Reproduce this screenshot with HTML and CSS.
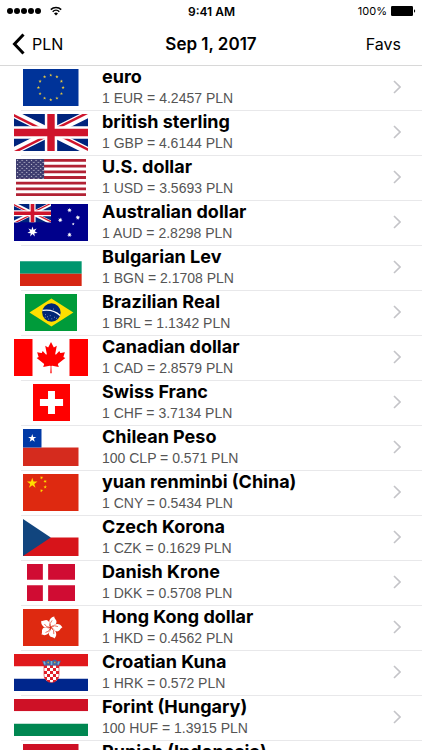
FILE: index.html
```html
<!DOCTYPE html>
<html lang="en">
<head>
    <meta charset="UTF-8">
    <meta name="viewport" content="width=device-width, initial-scale=1.0">
    <title>Exchange rates - PLN</title>
    <link rel="stylesheet" href="styles.css">
</head>
<body>
    <!-- shared shapes -->
    <svg class="defs" width="0" height="0" aria-hidden="true">
        <defs>
            <polygon id="star" points="0,-1 .225,-.309 .951,-.309 .363,.118 .588,.809 0,.382 -.588,.809 -.363,.118 -.951,-.309 -.225,-.309"/>
            <polygon id="star7" points="0,-1 .195,-.405 .782,-.623 .439,-.1 .975,.223 .352,.281 .434,.901 0,.45 -.434,.901 -.352,.281 -.975,.223 -.439,-.1 -.782,-.623 -.195,-.405"/>
            <clipPath id="jackClip"><path d="M30 15h30v15zv15H0zH0V0zV0h30z"/></clipPath>
            <clipPath id="jackBox"><path d="M0 0h60v30H0z"/></clipPath>
            <g id="jack" clip-path="url(#jackBox)">
                <path d="M0 0h60v30H0z" fill="#00247d"/>
                <path d="M0 0l60 30M60 0L0 30" stroke="#fff" stroke-width="6"/>
                <path d="M0 0l60 30M60 0L0 30" stroke="#cf142b" stroke-width="4" clip-path="url(#jackClip)"/>
                <path d="M30 0v30M0 15h60" stroke="#fff" stroke-width="10"/>
                <path d="M30 0v30M0 15h60" stroke="#cf142b" stroke-width="6"/>
            </g>
            <pattern id="usStars" width="12.6" height="10.8" patternUnits="userSpaceOnUse">
                <use href="#star" fill="#fff" transform="translate(4 4) scale(2.7)"/>
                <use href="#star" fill="#fff" transform="translate(10.3 9.4) scale(2.7)"/>
            </pattern>
            <pattern id="checks" x="30" y="11" width="6" height="6" patternUnits="userSpaceOnUse">
                <path d="M0 0h6v6H0z" fill="#fff"/>
                <path d="M0 0h3v3H0zM3 3h3v3H3z" fill="#e0202a"/>
            </pattern>
            <path id="petal" d="M0 -12C-62 -48 -78 -132 -6 -172C-4 -140 56 -142 54 -88C52 -52 10 -50 0 -12z"/>
            <symbol id="chevron" viewBox="0 0 8 14"><path d="M1 1l6 6-6 6" fill="none" stroke="#c4c4c8" stroke-width="1.6"/></symbol>
        </defs>
    </svg>

    <div class="statusbar">
        <div class="signal">
            <i></i><i></i><i></i><i></i><i></i>
            <svg class="wifi" viewBox="0 0 12 10" aria-hidden="true">
                <path d="M.8 3.6a7.4 7.4 0 0 1 10.4 0M2.7 5.7a4.7 4.7 0 0 1 6.6 0" fill="none" stroke="#000" stroke-width="1.5"/>
                <path d="M6 9.6L4 7.5a2.8 2.8 0 0 1 4 0z"/>
            </svg>
        </div>
        <div class="time">9:41 AM</div>
        <div class="battery">
            <span>100%</span>
            <svg viewBox="0 0 25 10" aria-hidden="true">
                <rect width="22" height="10" rx="1.2"/>
                <path d="M23 3.3a1.8 1.8 0 0 1 0 3.4z"/>
            </svg>
        </div>
    </div>

    <header class="navbar">
        <a class="back" href="#">
            <svg viewBox="0 0 13 22" aria-hidden="true"><path d="M11.5 1.5L2.5 11l9 9.5" fill="none" stroke="#000" stroke-width="3"/></svg>
            PLN
        </a>
        <h1>Sep 1, 2017</h1>
        <a class="favs" href="#">Favs</a>
    </header>

    <ul class="rates">
        <li>
            <a class="row" href="#">
                <span class="flag"><svg viewBox="0 0 54 36">
                    <path d="M0 0h54v36H0z" fill="#039"/>
                    <g fill="#f0cf3c">
                        <use href="#star" transform="translate(27 6) scale(1.7)"/>
                        <use href="#star" transform="translate(33 7.6) scale(1.7)"/>
                        <use href="#star" transform="translate(37.4 12) scale(1.7)"/>
                        <use href="#star" transform="translate(39 18) scale(1.7)"/>
                        <use href="#star" transform="translate(37.4 24) scale(1.7)"/>
                        <use href="#star" transform="translate(33 28.4) scale(1.7)"/>
                        <use href="#star" transform="translate(27 30) scale(1.7)"/>
                        <use href="#star" transform="translate(21 28.4) scale(1.7)"/>
                        <use href="#star" transform="translate(16.6 24) scale(1.7)"/>
                        <use href="#star" transform="translate(15 18) scale(1.7)"/>
                        <use href="#star" transform="translate(16.6 12) scale(1.7)"/>
                        <use href="#star" transform="translate(21 7.6) scale(1.7)"/>
                    </g>
                </svg></span>
                <span class="info"><b>euro</b><small>1 EUR = 4.2457 PLN</small></span>
                <svg class="chevron"><use href="#chevron"/></svg>
            </a>
        </li>
        <li>
            <a class="row" href="#">
                <span class="flag"><svg viewBox="0 0 60 30"><use href="#jack"/></svg></span>
                <span class="info"><b>british sterling</b><small>1 GBP = 4.6144 PLN</small></span>
                <svg class="chevron"><use href="#chevron"/></svg>
            </a>
        </li>
        <li>
            <a class="row" href="#">
                <span class="flag"><svg viewBox="0 0 190 100">
                    <path d="M0 0h190v100H0z" fill="#fff"/>
                    <path d="M0 3.85h190M0 19.23h190M0 34.62h190M0 50h190M0 65.38h190M0 80.77h190M0 96.15h190" stroke="#b22234" stroke-width="7.69"/>
                    <path d="M0 0h76v53.8H0z" fill="#3c3b6e"/>
                    <path d="M0 0h76v53.8H0z" fill="url(#usStars)"/>
                </svg></span>
                <span class="info"><b>U.S. dollar</b><small>1 USD = 3.5693 PLN</small></span>
                <svg class="chevron"><use href="#chevron"/></svg>
            </a>
        </li>
        <li>
            <a class="row" href="#">
                <span class="flag"><svg viewBox="0 0 120 60">
                    <path d="M0 0h120v60H0z" fill="#00008b"/>
                    <use href="#jack"/>
                    <g fill="#fff">
                        <use href="#star7" transform="translate(30 45) scale(8.5)"/>
                        <use href="#star7" transform="translate(90 10) scale(4)"/>
                        <use href="#star7" transform="translate(103.5 22) scale(4)"/>
                        <use href="#star7" transform="translate(75 26) scale(4)"/>
                        <use href="#star7" transform="translate(90 50) scale(4)"/>
                        <use href="#star" transform="translate(96 32.5) scale(2.5)"/>
                    </g>
                </svg></span>
                <span class="info"><b>Australian dollar</b><small>1 AUD = 2.8298 PLN</small></span>
                <svg class="chevron"><use href="#chevron"/></svg>
            </a>
        </li>
        <li>
            <a class="row" href="#">
                <span class="flag"><svg viewBox="0 0 5 3">
                    <path d="M0 0h5v1H0z" fill="#fff"/>
                    <path d="M0 1h5v1H0z" fill="#00966e"/>
                    <path d="M0 2h5v1H0z" fill="#d62612"/>
                </svg></span>
                <span class="info"><b>Bulgarian Lev</b><small>1 BGN = 2.1708 PLN</small></span>
                <svg class="chevron"><use href="#chevron"/></svg>
            </a>
        </li>
        <li>
            <a class="row" href="#">
                <span class="flag"><svg viewBox="0 0 200 140">
                    <path d="M0 0h200v140H0z" fill="#009b3a"/>
                    <path d="M100 17l83 53-83 53-83-53z" fill="#fedf00"/>
                    <circle cx="100" cy="70" r="35" fill="#002776"/>
                    <path d="M66 62q40-6 67 19" fill="none" stroke="#fff" stroke-width="5"/>
                    <path d="M76 78h3M84 86h3M94 82h3M100 94h3M110 88h3M118 92h3M88 95h3M106 57h3M75 88h3" stroke="#b9c4de" stroke-width="3"/>
                </svg></span>
                <span class="info"><b>Brazilian Real</b><small>1 BRL = 1.1342 PLN</small></span>
                <svg class="chevron"><use href="#chevron"/></svg>
            </a>
        </li>
        <li>
            <a class="row" href="#">
                <span class="flag"><svg viewBox="-4800 -2400 9600 4800">
                    <path d="M-4800-2400h9600v4800h-9600z" fill="#fff"/>
                    <path d="M-4800-2400h2400v4800h-2400zM2400-2400h2400v4800h-2400z" fill="#f00"/>
                    <path fill="#f00" d="m-90 2030 45-863a95 95 0 0 0-111-98l-859 151 116-320a65 65 0 0 0-20-73l-941-762 212-99a65 65 0 0 0 34-79l-186-572 542 115a65 65 0 0 0 73-38l105-247 423 454a65 65 0 0 0 111-57l-204-1052 327 189a65 65 0 0 0 91-27l332-652 332 652a65 65 0 0 0 91 27l327-189-204 1052a65 65 0 0 0 111 57l423-454 105 247a65 65 0 0 0 73 38l542-115-186 572a65 65 0 0 0 34 79l212 99-941 762a65 65 0 0 0-20 73l116 320-859-151a95 95 0 0 0-111 98l45 863z"/>
                </svg></span>
                <span class="info"><b>Canadian dollar</b><small>1 CAD = 2.8579 PLN</small></span>
                <svg class="chevron"><use href="#chevron"/></svg>
            </a>
        </li>
        <li>
            <a class="row" href="#">
                <span class="flag"><svg viewBox="0 0 32 32">
                    <path d="M0 0h32v32H0z" fill="#f00"/>
                    <path d="M13 6h6v7h7v6h-7v7h-6v-7H6v-6h7z" fill="#fff"/>
                </svg></span>
                <span class="info"><b>Swiss Franc</b><small>1 CHF = 3.7134 PLN</small></span>
                <svg class="chevron"><use href="#chevron"/></svg>
            </a>
        </li>
        <li>
            <a class="row" href="#">
                <span class="flag"><svg viewBox="0 0 54 36">
                    <path d="M0 0h54v18H0z" fill="#fff"/>
                    <path d="M0 18h54v18H0z" fill="#d52b1e"/>
                    <path d="M0 0h18v18H0z" fill="#0039a6"/>
                    <use href="#star" fill="#fff" transform="translate(9 9) scale(4.2)"/>
                </svg></span>
                <span class="info"><b>Chilean Peso</b><small>100 CLP = 0.571 PLN</small></span>
                <svg class="chevron"><use href="#chevron"/></svg>
            </a>
        </li>
        <li>
            <a class="row" href="#">
                <span class="flag"><svg viewBox="0 0 30 20">
                    <path d="M0 0h30v20H0z" fill="#de2910"/>
                    <g fill="#ffde00">
                        <use href="#star" transform="translate(5 5) scale(3)"/>
                        <use href="#star" transform="translate(10 2) rotate(24)"/>
                        <use href="#star" transform="translate(12 4) rotate(45)"/>
                        <use href="#star" transform="translate(12 7)"/>
                        <use href="#star" transform="translate(10 9) rotate(20)"/>
                    </g>
                </svg></span>
                <span class="info"><b>yuan renminbi (China)</b><small>1 CNY = 0.5434 PLN</small></span>
                <svg class="chevron"><use href="#chevron"/></svg>
            </a>
        </li>
        <li>
            <a class="row" href="#">
                <span class="flag"><svg viewBox="0 0 54 36">
                    <path d="M0 0h54v18H0z" fill="#fff"/>
                    <path d="M0 18h54v18H0z" fill="#d7141a"/>
                    <path d="M0 0l27 18L0 36z" fill="#11457e"/>
                </svg></span>
                <span class="info"><b>Czech Korona</b><small>1 CZK = 0.1629 PLN</small></span>
                <svg class="chevron"><use href="#chevron"/></svg>
            </a>
        </li>
        <li>
            <a class="row" href="#">
                <span class="flag"><svg viewBox="0 0 37 28">
                    <path d="M0 0h37v28H0z" fill="#d00c33"/>
                    <path d="M14 0v28M0 14h37" stroke="#fff" stroke-width="4"/>
                </svg></span>
                <span class="info"><b>Danish Krone</b><small>1 DKK = 0.5708 PLN</small></span>
                <svg class="chevron"><use href="#chevron"/></svg>
            </a>
        </li>
        <li>
            <a class="row" href="#">
                <span class="flag"><svg viewBox="-450 -300 900 600">
                    <path d="M-450-300h900v600h-900z" fill="#de2910"/>
                    <g transform="scale(1.1)">
                        <g fill="#fff">
                            <use href="#petal" transform="rotate(20)"/>
                            <use href="#petal" transform="rotate(92)"/>
                            <use href="#petal" transform="rotate(164)"/>
                            <use href="#petal" transform="rotate(236)"/>
                            <use href="#petal" transform="rotate(308)"/>
                        </g>
                        <g fill="none" stroke="#de2910" stroke-width="9">
                            <path id="vein" d="M0 -15Q-24 -62 20 -105"/>
                            <use href="#vein" transform="rotate(72)"/>
                            <use href="#vein" transform="rotate(144)"/>
                            <use href="#vein" transform="rotate(216)"/>
                            <use href="#vein" transform="rotate(288)"/>
                        </g>
                    </g>
                </svg></span>
                <span class="info"><b>Hong Kong dollar</b><small>1 HKD = 0.4562 PLN</small></span>
                <svg class="chevron"><use href="#chevron"/></svg>
            </a>
        </li>
        <li>
            <a class="row" href="#">
                <span class="flag"><svg viewBox="0 0 74 37">
                    <path d="M0 0h74v37H0z" fill="#fff"/>
                    <path d="M0 0h74v12.3H0z" fill="#e0181c"/>
                    <path d="M0 24.7h74V37H0z" fill="#00268c"/>
                    <path d="M30 11h15v10a7.5 7.5 0 0 1-15 0z" fill="url(#checks)" stroke="#e0202a" stroke-width=".6"/>
                    <path d="M28 6.5l3.2 1 2.8-2 3.5 1.5 3.5-1.5 2.8 2 3.2-1-2 5H30z" fill="#45629f"/>
                    <path d="M30 7.5l1 3M37.5 7v4M45 7.5l-1 3" stroke="#6fb4dc" stroke-width="1.6"/>
                    <path d="M33.5 8.5h1.5M40 8.5h1.5" stroke="#d6a33c" stroke-width="1.5"/>
                </svg></span>
                <span class="info"><b>Croatian Kuna</b><small>1 HRK = 0.572 PLN</small></span>
                <svg class="chevron"><use href="#chevron"/></svg>
            </a>
        </li>
        <li>
            <a class="row" href="#">
                <span class="flag"><svg viewBox="0 0 6 3">
                    <path d="M0 0h6v1H0z" fill="#ce1126"/>
                    <path d="M0 1h6v1H0z" fill="#fff"/>
                    <path d="M0 2h6v1H0z" fill="#008751"/>
                </svg></span>
                <span class="info"><b>Forint (Hungary)</b><small>100 HUF = 1.3915 PLN</small></span>
                <svg class="chevron"><use href="#chevron"/></svg>
            </a>
        </li>
        <li>
            <a class="row" href="#">
                <span class="flag"><svg viewBox="0 0 54 36">
                    <path d="M0 0h54v18H0z" fill="#ce1126"/>
                    <path d="M0 18h54v18H0z" fill="#fff"/>
                </svg></span>
                <span class="info"><b>Rupiah (Indonesia)</b></span>
                <svg class="chevron"><use href="#chevron"/></svg>
            </a>
        </li>
    </ul>
</body>
</html>
```

FILE: styles.css
```css
* {
    box-sizing: border-box;
}
body {
    margin: 0;
    height: 100vh;
    display: flex;
    flex-direction: column;
    overflow: hidden;
    background: #fff;
    color: #000;
    font-family: Inter, "Liberation Sans", sans-serif;
}
a {
    color: inherit;
    text-decoration: none;
}
.defs {
    position: absolute;
}

/* status bar */
.statusbar {
    flex: none;
    display: grid;
    grid-template-columns: 1fr auto 1fr;
    align-items: center;
    height: 22px;
    padding: 0 6px 0 7px;
    font-size: 12px;
}
.signal {
    display: flex;
    align-items: center;
    gap: 1px;
}
.signal i {
    width: 6px;
    height: 6px;
    border-radius: 50%;
    background: #000;
}
.wifi {
    width: 12px;
    height: 10px;
    margin-left: 8px;
}
.time {
    font-weight: 600;
}
.battery {
    display: flex;
    align-items: center;
    justify-content: flex-end;
    gap: 4px;
    font-size: 11px;
}
.battery svg {
    width: 25px;
    height: 10px;
}

/* navigation */
.navbar {
    flex: none;
    display: grid;
    grid-template-columns: 1fr auto 1fr;
    align-items: center;
    height: 44px;
    padding: 0 12px;
    border-bottom: 1px solid #d8d8d8;
    font-size: 16px;
}
.navbar h1 {
    margin: 0;
    font-size: 17px;
    font-weight: 600;
}
.back {
    display: flex;
    align-items: center;
    gap: 7px;
}
.back svg {
    width: 13px;
    height: 22px;
}
.favs {
    justify-self: end;
    padding-right: 9px;
}

/* currency list */
.rates {
    flex: 1;
    min-height: 0;
    margin: 0;
    padding: 0;
    list-style: none;
    overflow: hidden;
}
.rates li::after {
    content: "";
    display: block;
    height: 1px;
    margin-left: 21px;
    background: #e8e8ea;
}
.row {
    display: flex;
    align-items: center;
    gap: 14px;
    height: 44px;
    padding: 0 21px 2px 14px;
}
.flag {
    flex: none;
    display: flex;
    justify-content: center;
    width: 74px;
}
.flag svg {
    height: 37px;
}
.info {
    flex: 1;
    display: flex;
    flex-direction: column;
    height: 42px;
}
.info b {
    font-size: 18px;
    font-weight: 700;
    line-height: 22px;
}
.info small {
    font-family: "Liberation Sans", Arial, sans-serif;
    font-size: 14px;
    line-height: 20px;
    color: #555;
}
.chevron {
    flex: none;
    width: 8px;
    height: 14px;
}
```
